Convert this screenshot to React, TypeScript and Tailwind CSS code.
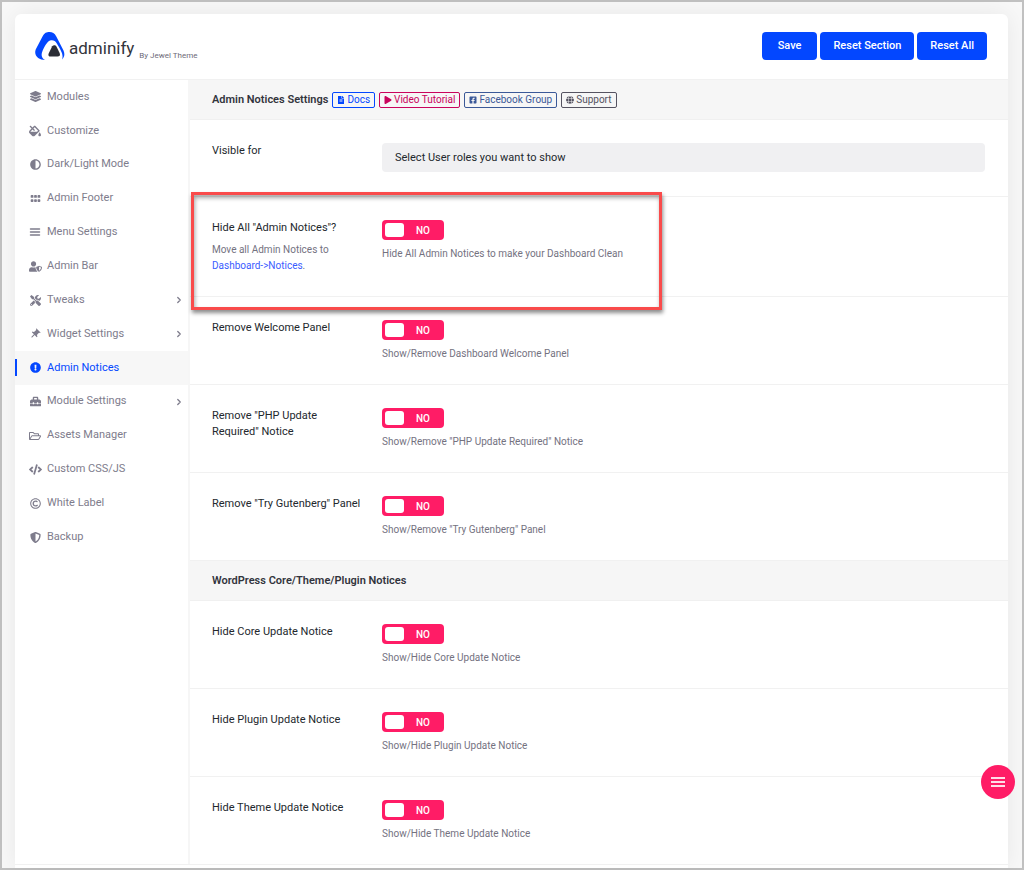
import { useState } from "react";
import type { ReactNode } from "react";
import type { IconType } from "react-icons";
import {
	FaAdjust,
	FaCode,
	FaExclamationCircle,
	FaFacebookSquare,
	FaFileAlt,
	FaFillDrip,
	FaGlobe,
	FaGripHorizontal,
	FaLayerGroup,
	FaPlay,
	FaRegCopyright,
	FaRegFolderOpen,
	FaShieldAlt,
	FaToolbox,
	FaTools,
	FaUserShield,
} from "react-icons/fa";
import { FiChevronRight, FiMenu } from "react-icons/fi";
import { MdPushPin } from "react-icons/md";

type MenuItem = {
	label: string;
	icon: IconType;
	iconClass?: string;
	hasChildren?: boolean;
};

const menu: MenuItem[] = [
	{ label: "Modules", icon: FaLayerGroup },
	{ label: "Customize", icon: FaFillDrip, iconClass: "size-3" },
	{ label: "Dark/Light Mode", icon: FaAdjust },
	{ label: "Admin Footer", icon: FaGripHorizontal },
	{ label: "Menu Settings", icon: FiMenu, iconClass: "size-3 stroke-3" },
	{ label: "Admin Bar", icon: FaUserShield, iconClass: "size-[13px]" },
	{ label: "Tweaks", icon: FaTools, hasChildren: true },
	{ label: "Widget Settings", icon: MdPushPin, iconClass: "size-3 rotate-45", hasChildren: true },
	{ label: "Admin Notices", icon: FaExclamationCircle },
	{ label: "Module Settings", icon: FaToolbox, hasChildren: true },
	{ label: "Assets Manager", icon: FaRegFolderOpen, iconClass: "size-3" },
	{ label: "Custom CSS/JS", icon: FaCode, iconClass: "size-[13px]" },
	{ label: "White Label", icon: FaRegCopyright },
	{ label: "Backup", icon: FaShieldAlt },
];

function Logo() {
	return (
		<div className="flex h-7 items-center gap-1">
			<svg viewBox="0 0 30 28" className="h-7 w-[30px]" aria-hidden="true">
				<path
					fill="#0347ff"
					d="M10 28C4 28-1.5 24 .7 17.500L7.500 4.500C9.500.8 11.500 0 14.500 0s5 1 6.800 4.500L28.500 18.500C30 22 29.500 25 27 27.600C28.800 22.500 26 18.500 21.800 11.500C20.200 8.700 17.800 7.600 15 8.600C12.500 9.500 9.500 14.500 7.500 19C5.800 23 6.500 26 10 28Z"
				/>
				<path
					fill="#2b2d36"
					d="M17.200 14.200c1.400-1.200 3.200-1.200 4.400.5l3 6.300c1 2.300 0 3.600-2.200 3.600h-6.600c-2.200 0-3-1.300-2-3.400Z"
				/>
			</svg>
			<h1 className="pt-1 text-[17px] leading-6 text-[#32343c]">adminify</h1>
			<small className="pt-5 pl-px text-[8px] leading-3 text-[#6d6a78]">By Jewel Theme</small>
		</div>
	);
}

function HeaderButton({ children, className }: { children: ReactNode; className: string }) {
	return (
		<button
			type="button"
			className={`h-7 rounded-[4px] bg-[#0347ff] text-[11px] leading-4 font-medium text-white hover:bg-[#023ad6] ${className}`}
		>
			{children}
		</button>
	);
}

function SidebarItem({ item, active, onSelect }: { item: MenuItem; active: boolean; onSelect: () => void }) {
	const Icon = item.icon;

	return (
		<li className="flex flex-1">
			<a
				href="#"
				onClick={(e) => {
					e.preventDefault();
					onSelect();
				}}
				className={`relative flex flex-1 items-center pr-1 pl-3.5 text-[11px] ${
					active ? "bg-[#f7f7f7] text-[#0347ff]" : "text-[#7e7c8c]"
				}`}
			>
				{active && <span className="absolute left-0 h-[17px] w-0.5 bg-[#0347ff]" />}
				<span className="flex w-3 justify-center">
					<Icon className={`shrink-0 ${item.iconClass ?? "size-[11px]"}`} />
				</span>
				<span className="ml-1.5 flex-1">{item.label}</span>
				{item.hasChildren && <FiChevronRight className="size-2.5" strokeWidth={3} />}
			</a>
		</li>
	);
}

function BadgeLink({ icon: Icon, className, children }: { icon: IconType; className: string; children: ReactNode }) {
	return (
		<a
			href="#"
			className={`flex h-4 items-center gap-0.5 rounded-xs border px-1 text-[10px] leading-4 font-normal ${className}`}
		>
			<Icon className="size-2" />
			{children}
		</a>
	);
}

function SectionTitle({ title, children }: { title: string; children?: ReactNode }) {
	return (
		<div className="flex h-10 items-center gap-1 border-b border-[#f0f0f0] bg-[#f6f6f6] px-[22px]">
			<h2 className="text-[11px] leading-4 font-semibold text-[#32343c]">{title}</h2>
			{children}
		</div>
	);
}

function Toggle({ id }: { id: string }) {
	const [on, setOn] = useState(false);

	return (
		<div className="relative h-5 w-[62px]">
			<input
				id={id}
				type="checkbox"
				checked={on}
				onChange={(e) => setOn(e.target.checked)}
				className="block size-full cursor-pointer appearance-none rounded-[4px] bg-[#ff1c66] checked:bg-[#0347ff]"
			/>
			<span
				className={`pointer-events-none absolute inset-0 flex items-center gap-3 px-[3px] text-[10px] font-medium text-white ${
					on ? "flex-row-reverse" : ""
				}`}
			>
				<span className="h-3.5 w-[19px] rounded-[3px] bg-white" />
				{on ? "YES" : "NO"}
			</span>
		</div>
	);
}

type SettingRowProps = {
	id: string;
	label: string;
	hint?: ReactNode;
	overlay?: ReactNode;
	children: ReactNode;
};

function SettingRow({ id, label, hint, overlay, children }: SettingRowProps) {
	return (
		<div className="relative flex border-b border-[#f1f1f1] pt-[23px] pr-[23px] pb-[22px] pl-[22px] last:border-0">
			<div className="w-[170px] shrink-0 pr-4">
				<label htmlFor={id} className="block text-[11px] leading-4 text-[#23282d]">
					{label}
				</label>
				{hint}
			</div>
			<div className="min-w-0 flex-1">{children}</div>
			{overlay}
		</div>
	);
}

function ToggleRow({ description, ...row }: Omit<SettingRowProps, "children"> & { description: string }) {
	return (
		<SettingRow {...row}>
			<Toggle id={row.id} />
			<p className="mt-1.5 text-[10px] leading-4 text-[#74727f]">{description}</p>
		</SettingRow>
	);
}

export default function App() {
	const [current, setCurrent] = useState("Admin Notices");

	return (
		<div className="min-h-screen border-2 border-[#c1c1c1] bg-[#f8f8f8] pt-3 pr-3.5 pl-[13px] font-['Roboto',sans-serif]">
			<div className="rounded-t-md bg-white pb-[3px] shadow-[0_0_24px_rgba(0,0,0,0.07)]">
				<header className="flex items-center justify-between border-b border-[#f1f1f1] pt-[18px] pr-[21px] pb-[19px] pl-5">
					<Logo />
					<div className="flex gap-[3px]">
						<HeaderButton className="px-4">Save</HeaderButton>
						<HeaderButton className="px-[13px]">Reset Section</HeaderButton>
						<HeaderButton className="px-[13px]">Reset All</HeaderButton>
					</div>
				</header>

				<div className="flex border-b border-[#f1f1f1]">
					<nav className="w-[175px] shrink-0 border-r-2 border-[#f6f6f6]">
						<ul className="flex h-[474px] flex-col">
							{menu.map((item) => (
								<SidebarItem
									key={item.label}
									item={item}
									active={item.label === current}
									onSelect={() => setCurrent(item.label)}
								/>
							))}
						</ul>
					</nav>

					<main className="min-w-0 flex-1">
						<SectionTitle title="Admin Notices Settings">
							<div className="flex gap-1">
								<BadgeLink icon={FaFileAlt} className="border-[#0347ff] text-[#0347ff]">
									Docs
								</BadgeLink>
								<BadgeLink icon={FaPlay} className="border-[#c9045c] text-[#c9045c]">
									Video Tutorial
								</BadgeLink>
								<BadgeLink icon={FaFacebookSquare} className="border-[#3b5998] text-[#3b5998]">
									Facebook Group
								</BadgeLink>
								<BadgeLink icon={FaGlobe} className="border-[#555361] text-[#555361]">
									Support
								</BadgeLink>
							</div>
						</SectionTitle>

						<SettingRow id="visible-for" label="Visible for">
							<select
								id="visible-for"
								className="mb-0.5 block h-[29px] w-full appearance-none rounded-[4px] bg-[#f0f0f2] px-[13px] pt-0.5 text-[11px] text-[#23282d]"
							>
								<option>Select User roles you want to show</option>
							</select>
						</SettingRow>

						<ToggleRow
							id="hide-all"
							label={'Hide All "Admin Notices"?'}
							description="Hide All Admin Notices to make your Dashboard Clean"
							hint={
								<p className="mt-1.5 text-[10px] leading-4 text-[#74727f]">
									Move all Admin Notices to{" "}
									<a href="#" className="text-[#3a5cff]">
										Dashboard-&gt;Notices
									</a>
									.
								</p>
							}
							overlay={
								<div className="pointer-events-none absolute -top-[5px] left-px z-10 h-[118px] w-[471px] border-3 border-[#f94b4b] shadow-[1px_3px_4px_rgba(0,0,0,0.45),inset_1px_3px_4px_rgba(0,0,0,0.35)]" />
							}
						/>
						<ToggleRow
							id="welcome-panel"
							label="Remove Welcome Panel"
							description="Show/Remove Dashboard Welcome Panel"
						/>
						<ToggleRow
							id="php-update"
							label={'Remove "PHP Update Required" Notice'}
							description={'Show/Remove "PHP Update Required" Notice'}
						/>
						<ToggleRow
							id="try-gutenberg"
							label={'Remove "Try Gutenberg" Panel'}
							description={'Show/Remove "Try Gutenberg" Panel'}
						/>

						<SectionTitle title="WordPress Core/Theme/Plugin Notices" />

						<ToggleRow id="core-update" label="Hide Core Update Notice" description="Show/Hide Core Update Notice" />
						<ToggleRow
							id="plugin-update"
							label="Hide Plugin Update Notice"
							description="Show/Hide Plugin Update Notice"
						/>
						<ToggleRow
							id="theme-update"
							label="Hide Theme Update Notice"
							description="Show/Hide Theme Update Notice"
						/>
					</main>
				</div>
			</div>

			{/* Quick menu */}
			<button
				type="button"
				aria-label="Open quick menu"
				className="fixed right-[9px] bottom-[71px] z-20 flex size-[34px] items-center justify-center rounded-full bg-[#ff1c66] text-white"
			>
				<svg viewBox="0 0 14 10" className="h-2.5 w-3.5" aria-hidden="true">
					<path fill="currentColor" fillOpacity="0.85" d="M0 0h14v2H0zM0 4h14v2H0zM0 8h14v2H0z" />
				</svg>
			</button>
		</div>
	);
}
